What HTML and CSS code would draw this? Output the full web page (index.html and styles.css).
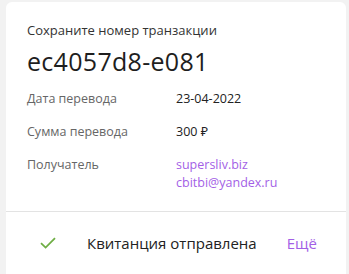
FILE: index.html
```html
<!DOCTYPE html>
<html lang="ru">
<head>
<meta charset="utf-8">
<link rel="stylesheet" href="styles.css">
</head>
<body>
<div class="card">
  <div class="main">
    <div class="hint">Сохраните номер транзакции</div>
    <div class="txid">ec4057d8-e081</div>
    <div class="rows">
      <div class="row"><span class="label">Дата перевода</span><span class="value">23-04-2022</span></div>
      <div class="row"><span class="label">Сумма перевода</span><span class="value">300 ₽</span></div>
      <div class="row"><span class="label">Получатель</span><span class="value links"><a>supersliv.biz</a><a>cbitbi@yandex.ru</a></span></div>
    </div>
  </div>
  <div class="footer">
    <svg class="check" width="16" height="12" viewBox="0 0 16 12"><path d="M1 6.2 L5.6 10.6 L15 1.2" fill="none" stroke="#6fae45" stroke-width="1.8"/></svg>
    <span class="status">Квитанция отправлена</span>
    <a class="more">Ещё</a>
  </div>
</div>
</body>
</html>
```
FILE: styles.css
```css
html, body { margin: 0; padding: 0; }
body {
  background: #f2f2f2;
  font-family: "Open Sans", "Noto Sans", sans-serif;
  color: #222;
  padding: 2px 3px 0 6px;
  height: 274px;
  box-sizing: border-box;
  overflow: hidden;
}
.card {
  background: #fff;
  border-radius: 6px 6px 0 0;
  width: 340px;
  height: 280px;
}
.main {
  padding: 19px 21px 0 21px;
  height: 210px;
  box-sizing: border-box;
  border-bottom: 1px solid #e3e3e3;
}
.hint { font-size: 13px; color: #333; line-height: 18px; }
.txid { font-size: 25px; color: #1e1e1e; line-height: 30px; margin-top: 7px; letter-spacing: 0.3px; }
.rows { margin-top: 14px; }
.row { display: flex; font-size: 12.5px; line-height: 18px; margin-bottom: 15px; }
.label { width: 149px; color: #666; }
.value { color: #222; }
.links { display: flex; flex-direction: column; }
.links a { color: #a35fe6; }
.footer {
  display: flex;
  align-items: center;
  height: 62px;
  padding-left: 34px;
  font-size: 15px;
}
.check { margin-right: 31px; }
.status { color: #222; }
.more { color: #a35fe6; margin-left: 30px; }
```
